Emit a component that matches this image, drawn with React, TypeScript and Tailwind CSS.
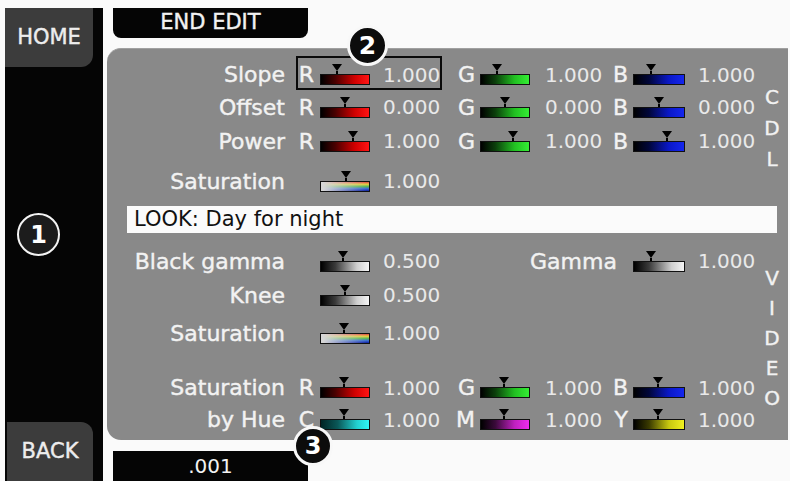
import type { ReactNode } from 'react'

type Tone = 'r' | 'g' | 'b' | 'c' | 'm' | 'y' | 'gray' | 'sat'

const fills: Record<Tone, string> = {
  r: 'bg-[linear-gradient(to_right,#000_0%,#4a0000_30%,#d00000_70%,#ff1414_100%)]',
  g: 'bg-[linear-gradient(to_right,#000_0%,#0b3f0b_30%,#22c022_70%,#34ee34_100%)]',
  b: 'bg-[linear-gradient(to_right,#000_0%,#00063a_30%,#0a18c8_70%,#1426ee_100%)]',
  c: 'bg-[linear-gradient(to_right,#002424_0%,#0a5858_35%,#22d0d0_75%,#30f4f4_100%)]',
  m: 'bg-[linear-gradient(to_right,#000_0%,#3a0a3a_30%,#c020c0_70%,#ee2cee_100%)]',
  y: 'bg-[linear-gradient(to_right,#000_0%,#3a3a00_30%,#c8c810_70%,#f0f020_100%)]',
  gray: 'bg-[linear-gradient(to_right,#000_0%,#3a3a3a_30%,#cfcfcf_75%,#f4f4f4_100%)]',
  sat: 'bg-[linear-gradient(to_right,#d6d6d6_5%,rgba(214,214,214,0)_95%),linear-gradient(to_bottom,#e04848,#e8d040,#58b858,#3a68d8,#10209c)]',
}

// shared column template: label | ch | bar | value | ch | bar | value | ch | bar | value
const cols = 'grid grid-cols-[182px_31px_50px_75px_35px_50px_80px_23px_52px_75px]'

// a touch heavier than the plain regular face
const heavy = '[-webkit-text-stroke:0.4px_#f2f2f2]'

function Slider({ tone, at }: { tone: Tone; at: number }) {
  return (
    <div className={`relative mt-[10px] h-[11px] w-full border border-[#111] ${fills[tone]}`}>
      <span
        className="absolute -top-[11px] flex -translate-x-1/2 flex-col items-center"
        style={{ left: `${at}%` }}
      >
        <span className="h-0 w-0 border-x-[5px] border-t-[7px] border-x-transparent border-t-black" />
        <span className="h-[3px] w-[2px] bg-black" />
      </span>
    </div>
  )
}

const Label = ({ children }: { children: ReactNode }) => (
  <span className={`pr-[4px] text-right text-[22px] text-[#f2f2f2] ${heavy}`}>{children}</span>
)

const Ch = ({ children, pr = 'pr-[6px]' }: { children?: ReactNode; pr?: string }) => (
  <span className={`text-right text-[22px] text-[#f2f2f2] ${heavy} ${pr}`}>{children}</span>
)

const Val = ({ children, pl = 'pl-[13px]' }: { children: ReactNode; pl?: string }) => (
  <span className={`text-[20px] text-[#e9e9e9] ${pl}`}>{children}</span>
)

function RgbRow({
  label,
  h,
  at,
  values,
  letters = ['R', 'G', 'B'],
  tones = ['r', 'g', 'b'],
  focus,
}: {
  label: ReactNode
  h: string
  at: number
  values: string[]
  letters?: string[]
  tones?: Tone[]
  focus?: boolean
}) {
  return (
    <div className={`${cols} ${h} items-center`}>
      <Label>{label}</Label>
      {focus ? (
        <div className="relative col-span-3 grid grid-cols-[31px_50px_75px] items-center">
          <span className="pointer-events-none absolute -top-[2px] bottom-[1px] left-[7px] right-[3px] border-2 border-[#0a0a0a]" />
          <Ch>{letters[0]}</Ch>
          <Slider tone={tones[0]} at={at} />
          <Val>{values[0]}</Val>
        </div>
      ) : (
        <>
          <Ch>{letters[0]}</Ch>
          <Slider tone={tones[0]} at={at} />
          <Val>{values[0]}</Val>
        </>
      )}
      <Ch pr="pr-[5px]">{letters[1]}</Ch>
      <Slider tone={tones[1]} at={at} />
      <Val pl="pl-[15px]">{values[1]}</Val>
      <Ch pr="pr-[5px]">{letters[2]}</Ch>
      <Slider tone={tones[2]} at={at} />
      <Val>{values[2]}</Val>
    </div>
  )
}

function Badge({ n, className }: { n: number; className: string }) {
  return (
    <div
      className={`absolute flex items-center justify-center rounded-full font-bold text-white ${className}`}
    >
      {n}
    </div>
  )
}

function SideWord({ word, lead, pad }: { word: string; lead: string; pad: string }) {
  return (
    <div
      className={`flex flex-1 flex-col items-center justify-center pr-[4px] text-[20px] text-[#f2f2f2] ${heavy} ${lead} ${pad}`}
    >
      {word.split('').map((c, i) => (
        <span key={i}>{c}</span>
      ))}
    </div>
  )
}

export default function App() {
  return (
    <div className="relative flex h-[481px] w-[790px] overflow-hidden bg-[#fafafa] font-['DejaVu_Sans',sans-serif]">
      {/* left soft-key strip */}
      <div className="ml-[5px] mt-[8px] flex w-[98px] flex-col justify-between bg-[#050505]">
        <div className={`flex h-[59px] w-[88px] items-center justify-center rounded-br-[12px] bg-[#3c3c3c] text-[21px] text-[#ececec] ${heavy}`}>
          HOME
        </div>
        <div className={`ml-[2px] flex h-[59px] w-[86px] items-center justify-center rounded-tr-[12px] bg-[#3c3c3c] text-[21px] text-[#ececec] ${heavy}`}>
          BACK
        </div>
      </div>

      <div className="ml-[4px] flex flex-1 flex-col">
        <div className="h-[48px] pl-[6px] pt-[8px]">
          <div className={`flex h-[30px] w-[195px] items-center justify-center rounded-b-[8px] bg-[#050505] text-[21px] text-[#f2f2f2] ${heavy}`}>
            END EDIT
          </div>
        </div>

        <div className="mr-[2px] flex h-[392px] flex-col rounded-l-[14px] border-t border-[#a0a0a0] bg-[#898989] pt-[9px]">
          {/* CDL section */}
          <div className="flex">
            <div className="flex w-[653px] flex-col">
              <RgbRow label="Slope" h="h-[32px]" at={33} values={['1.000', '1.000', '1.000']} focus />
              <RgbRow label="Offset" h="h-[34px]" at={49} values={['0.000', '0.000', '0.000']} />
              <RgbRow label="Power" h="h-[34px]" at={66} values={['1.000', '1.000', '1.000']} />
              <div className={`${cols} h-[46px] items-center`}>
                <Label>Saturation</Label>
                <Ch />
                <Slider tone="sat" at={52} />
                <Val>1.000</Val>
              </div>
            </div>
            <SideWord word="CDL" lead="leading-[31px]" pad="pb-[6px]" />
          </div>

          <div className="ml-[20px] mr-[11px] mt-[2px] flex h-[27px] items-center bg-[#fbfbfb] pl-[7px] text-[21px] text-[#111]">
            LOOK: Day for night
          </div>

          {/* video section */}
          <div className="mt-[11px] flex">
            <div className="flex w-[653px] flex-col">
              <div className={`${cols} h-[34px] items-center`}>
                <Label>Black gamma</Label>
                <Ch />
                <Slider tone="gray" at={45} />
                <Val>0.500</Val>
                <span className={`col-span-2 col-start-7 pr-[25px] text-right text-[22px] text-[#f2f2f2] ${heavy}`}>
                  Gamma
                </span>
                <Slider tone="gray" at={33} />
                <Val>1.000</Val>
              </div>
              <div className={`${cols} h-[34px] items-center`}>
                <Label>Knee</Label>
                <Ch />
                <Slider tone="gray" at={50} />
                <Val>0.500</Val>
              </div>
              <div className={`${cols} h-[42px] items-center`}>
                <Label>Saturation</Label>
                <Ch />
                <Slider tone="sat" at={48} />
                <Val>1.000</Val>
              </div>
              <div className="h-[17px]" />
              <RgbRow label="Saturation" h="h-[32px]" at={48} values={['1.000', '1.000', '1.000']} />
              <RgbRow
                label="by Hue"
                h="h-[32px]"
                at={48}
                values={['1.000', '1.000', '1.000']}
                letters={['C', 'M', 'Y']}
                tones={['c', 'm', 'y']}
              />
            </div>
            <SideWord word="VIDEO" lead="leading-[30px]" pad="pb-[4px]" />
          </div>
        </div>

        <div className="pl-[6px] pt-[11px]">
          <div className="flex h-[30px] w-[195px] items-center justify-center rounded-tr-[10px] bg-[#050505] text-[20px] text-[#f2f2f2]">
            .001
          </div>
        </div>
      </div>

      <Badge n={1} className="left-[17px] top-[213px] h-[43px] w-[43px] border-2 border-[#f4f4f4] bg-[#1c1c1c] text-[24px]" />
      <Badge n={2} className="left-[347px] top-[25px] h-[41px] w-[41px] border-[3px] border-[#f8f8f8] bg-[#0c0c0c] text-[25px]" />
      <Badge n={3} className="left-[293px] top-[426px] h-[40px] w-[40px] border-[3px] border-[#f8f8f8] bg-[#0c0c0c] text-[24px]" />
    </div>
  )
}
